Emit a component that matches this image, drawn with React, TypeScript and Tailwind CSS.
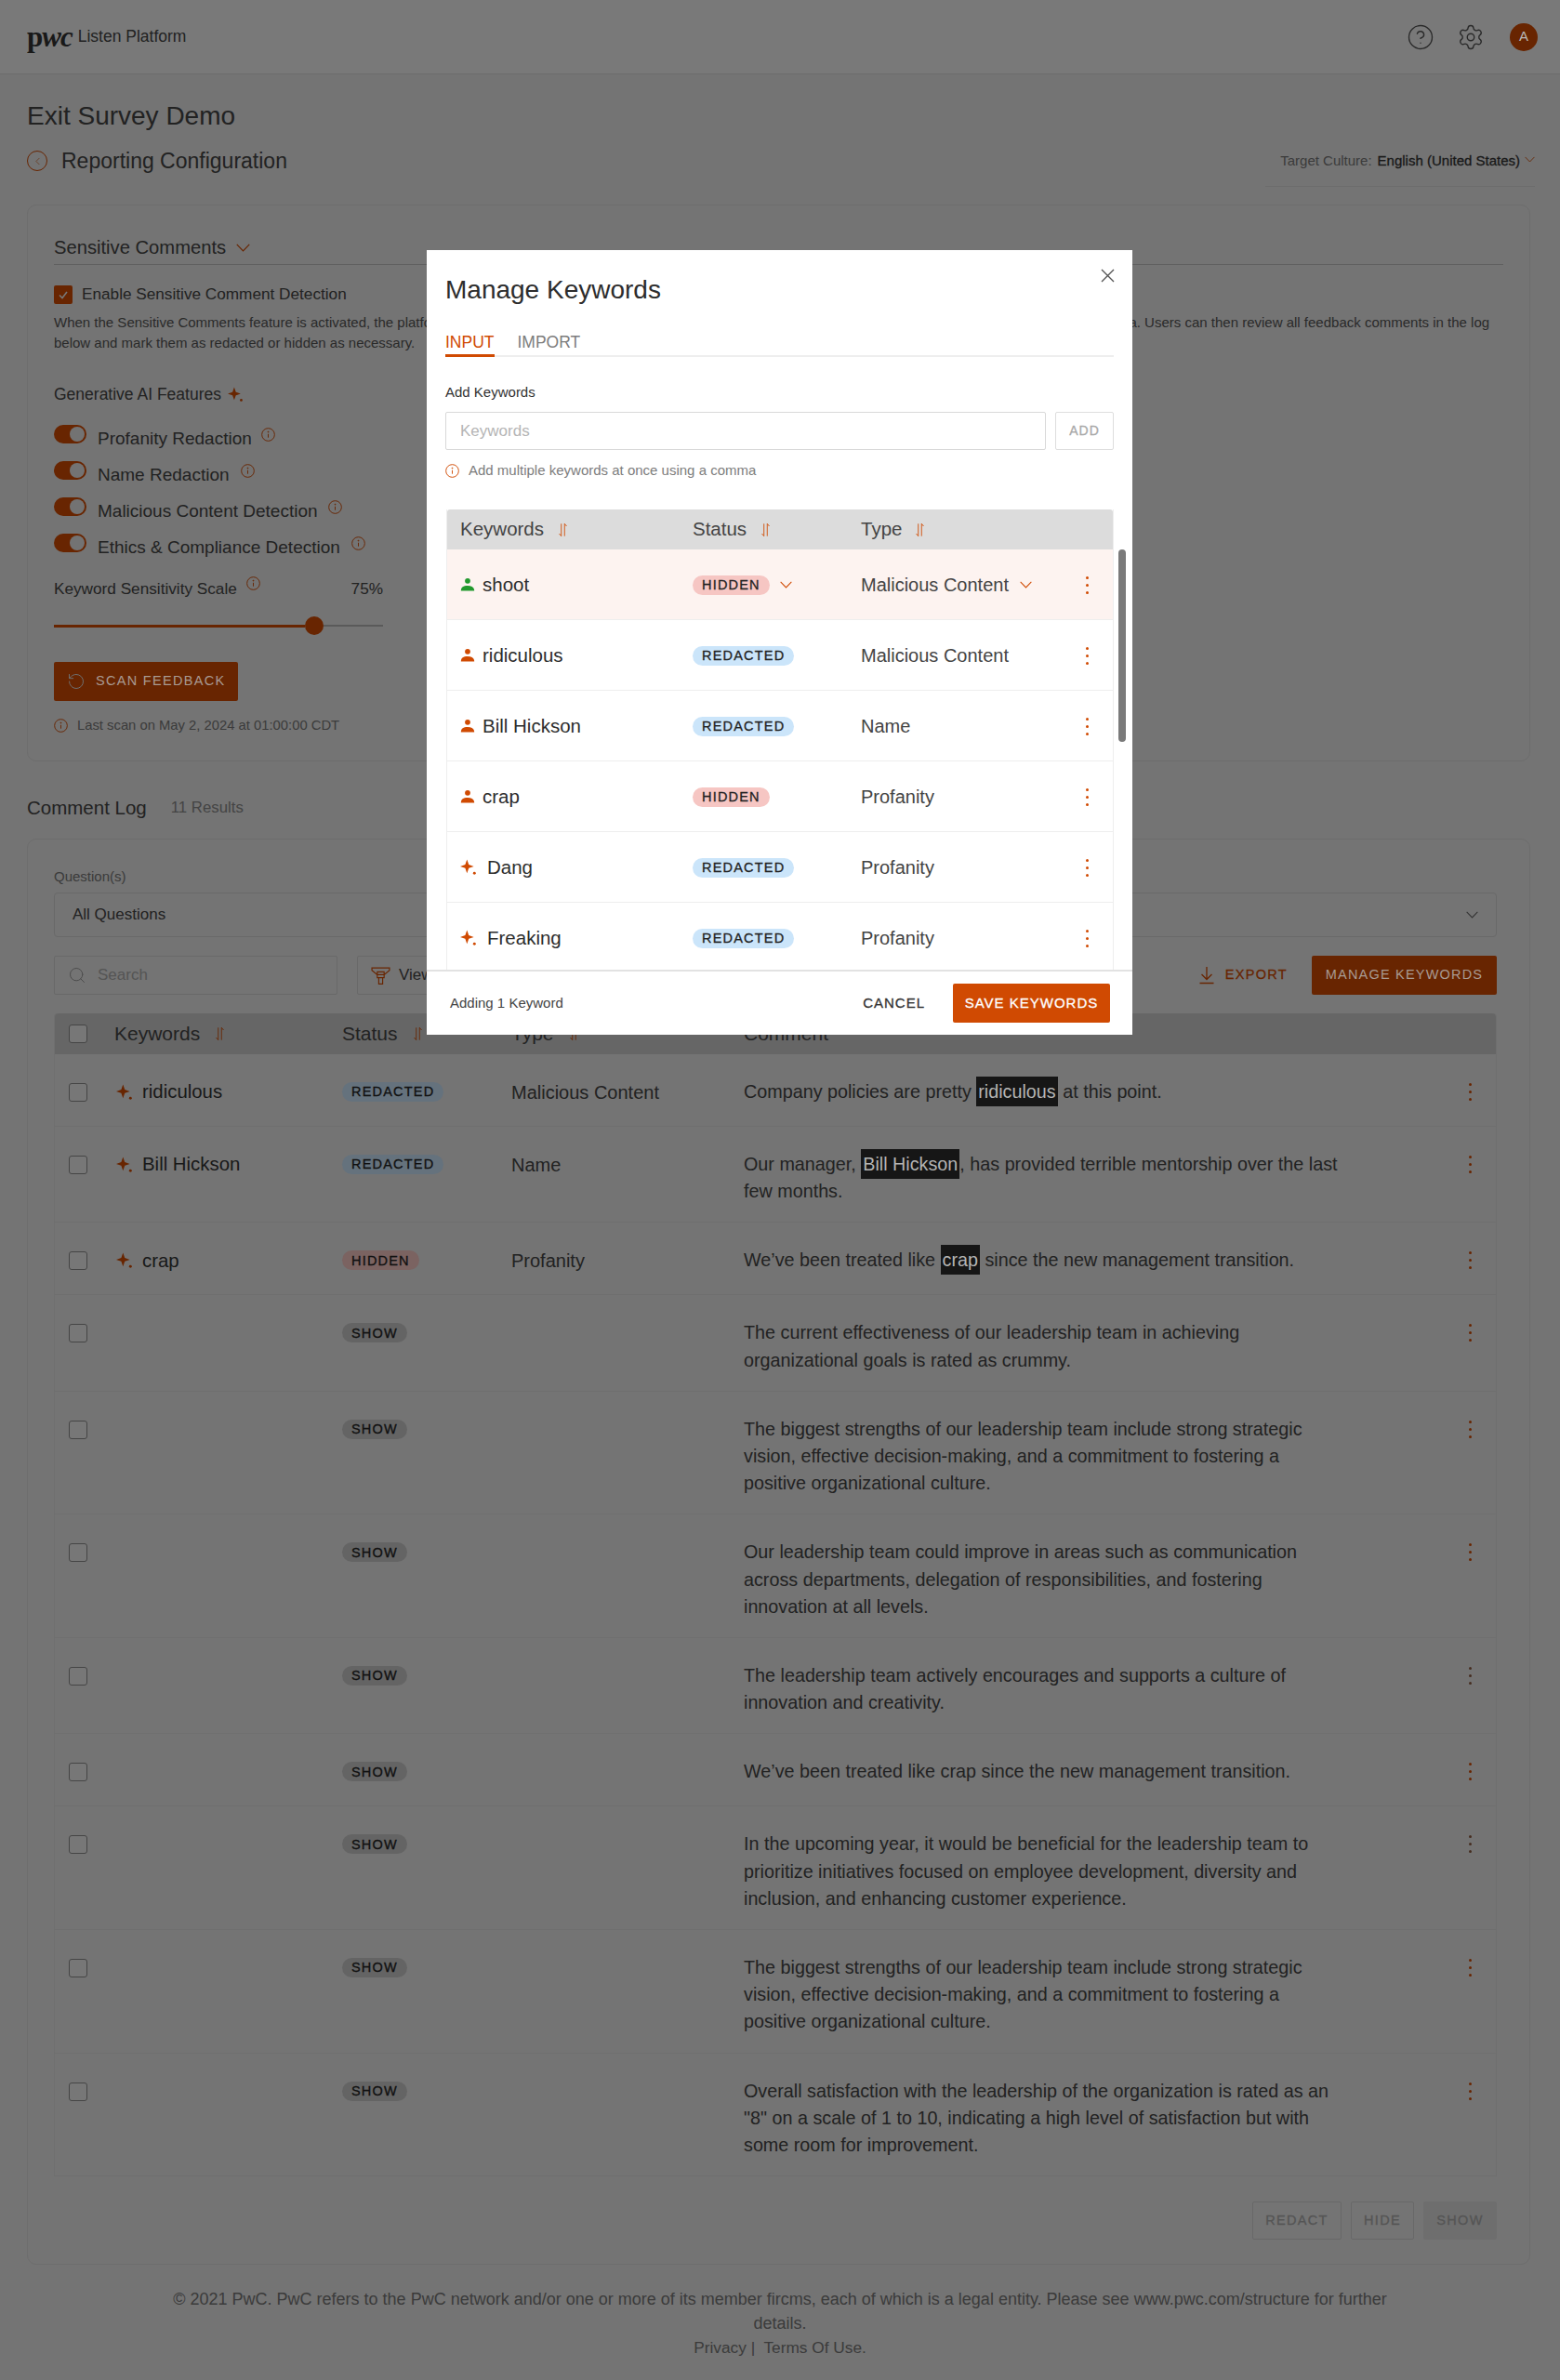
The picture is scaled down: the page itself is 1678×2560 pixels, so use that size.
import type { ReactNode } from "react";
import { ChevronLeft, CircleHelp, RotateCw, Search, Settings } from "lucide-react";

const orange = "#d04a02";
const semi = "[-webkit-text-stroke:0.3px_currentColor]";

function InfoIcon({ className = "w-[15px] h-[15px]" }: { className?: string }) {
  return (
    <svg viewBox="0 0 16 16" fill="none" className={className} stroke={orange} strokeWidth="1">
      <circle cx="8" cy="8" r="7.3" />
      <path d="M8 7.2v4.2" />
      <circle cx="8" cy="4.9" r="0.5" fill={orange} />
    </svg>
  );
}

function Sparkle({ className = "w-[18px] h-[18px]" }: { className?: string }) {
  return (
    <svg viewBox="0 0 16 16" className={className} fill={orange}>
      <path d="M6.5 0.5 L8.2 5.3 L13 7 L8.2 8.7 L6.5 13.5 L4.8 8.7 L0 7 L4.8 5.3 Z" />
      <circle cx="13.6" cy="13.6" r="1.3" />
    </svg>
  );
}

function Person({ color = orange }: { color?: string }) {
  return (
    <svg viewBox="0 0 16 16" className="w-[16px] h-[16px] shrink-0" fill={color}>
      <circle cx="8" cy="3.8" r="2.9" />
      <path d="M0.8 14.5c0-3.6 2.6-5.4 7.2-5.4s7.2 1.8 7.2 5.4z" />
    </svg>
  );
}

function SortIcon() {
  return (
    <svg viewBox="0 0 12 18" className="w-[11px] h-[16px]" fill="none" stroke={orange} strokeWidth="1">
      <path d="M4 1.5v15M4 16.5l-2.5-3M8 16.5v-15M8 1.5l2.5 3" />
    </svg>
  );
}

function Chevron({ className = "w-[13px] h-[8px]", color = orange }: { className?: string; color?: string }) {
  return (
    <svg viewBox="0 0 14 8" className={`${className} shrink-0`} fill="none" stroke={color} strokeWidth="1.1">
      <path d="M0.7 0.7L7 7.2 13.3 0.7" />
    </svg>
  );
}

function Kebab({ color = orange }: { color?: string }) {
  return (
    <div className="flex flex-col gap-[5px] items-center w-[3px]">
      <span className="w-[3px] h-[3px] rounded-full" style={{ background: color }} />
      <span className="w-[3px] h-[3px] rounded-full" style={{ background: color }} />
      <span className="w-[3px] h-[3px] rounded-full" style={{ background: color }} />
    </div>
  );
}

function Badge({ kind }: { kind: "REDACTED" | "HIDDEN" | "SHOW" }) {
  const tone =
    kind === "REDACTED" ? "bg-[#cbe5fa]" : kind === "HIDDEN" ? "bg-[#f6c6c3]" : "bg-[#c9c9c9]";
  return (
    <span
      className={`${tone} ${semi} inline-flex items-center h-[21px] px-[10px] rounded-full text-[14.5px] tracking-[1.2px] text-[#222] leading-none`}
    >
      {kind}
    </span>
  );
}

function Toggle({ label, gap }: { label: string; gap: string }) {
  return (
    <div className="flex items-start h-[39px]">
      <div className="w-[35px] h-[20px] rounded-full bg-[#d04a02] flex items-center justify-end pr-[2px]">
        <span className="w-[16px] h-[16px] rounded-full bg-[#e6e6e6]" />
      </div>
      <span className="ml-[12px] mt-[1px] text-[19px] leading-[28px] text-[#444]">{label}</span>
      <span className={`${gap} mt-[3px]`}>
        <InfoIcon />
      </span>
    </div>
  );
}

// highlighted words stay bright above the backdrop
const Hl = ({ children }: { children: ReactNode }) => (
  <span className="relative z-10 bg-[#161616] text-[#b4b4b4] px-[2px] py-[5px]">{children}</span>
);

type Row = {
  keyword?: string;
  status: "REDACTED" | "HIDDEN" | "SHOW";
  type?: string;
  comment: ReactNode;
  gray?: boolean;
};

const logRows: Row[] = [
  {
    keyword: "ridiculous",
    status: "REDACTED",
    type: "Malicious Content",
    comment: (
      <>
        Company policies are pretty <Hl>ridiculous</Hl> at this point.
      </>
    ),
  },
  {
    keyword: "Bill Hickson",
    status: "REDACTED",
    type: "Name",
    comment: (
      <>
        Our manager, <Hl>Bill Hickson</Hl>, has provided terrible mentorship over the last
        <br />
        few months.
      </>
    ),
  },
  {
    keyword: "crap",
    status: "HIDDEN",
    type: "Profanity",
    comment: (
      <>
        We’ve been treated like <Hl>crap</Hl> since the new management transition.
      </>
    ),
  },
  {
    status: "SHOW",
    comment:
      "The current effectiveness of our leadership team in achieving\norganizational goals is rated as crummy.",
  },
  {
    status: "SHOW",
    comment:
      "The biggest strengths of our leadership team include strong strategic\nvision, effective decision-making, and a commitment to fostering a\npositive organizational culture.",
  },
  {
    status: "SHOW",
    comment:
      "Our leadership team could improve in areas such as communication\nacross departments, delegation of responsibilities, and fostering\ninnovation at all levels.",
  },
  {
    status: "SHOW",
    gray: true,
    comment:
      "The leadership team actively encourages and supports a culture of\ninnovation and creativity.",
  },
  { status: "SHOW", comment: "We’ve been treated like crap since the new management transition." },
  {
    status: "SHOW",
    gray: true,
    comment:
      "In the upcoming year, it would be beneficial for the leadership team to\nprioritize initiatives focused on employee development, diversity and\ninclusion, and enhancing customer experience.",
  },
  {
    status: "SHOW",
    comment:
      "The biggest strengths of our leadership team include strong strategic\nvision, effective decision-making, and a commitment to fostering a\npositive organizational culture.",
  },
  {
    status: "SHOW",
    comment:
      "Overall satisfaction with the leadership of the organization is rated as an\n\"8\" on a scale of 1 to 10, indicating a high level of satisfaction but with\nsome room for improvement.",
  },
];

const keywordRows = [
  { name: "shoot", icon: "green", status: "HIDDEN", type: "Malicious Content", active: true },
  { name: "ridiculous", icon: "person", status: "REDACTED", type: "Malicious Content" },
  { name: "Bill Hickson", icon: "person", status: "REDACTED", type: "Name" },
  { name: "crap", icon: "person", status: "HIDDEN", type: "Profanity" },
  { name: "Dang", icon: "spark", status: "REDACTED", type: "Profanity" },
  { name: "Freaking", icon: "spark", status: "REDACTED", type: "Profanity" },
] as const;

function Checkbox() {
  return <span className="block w-[20px] h-[20px] rounded-[3px] border border-[#8a8a8a] bg-[#efefef]" />;
}

function ManageKeywords() {
  return (
    <div className="absolute z-20 left-[459px] top-[269px] w-[759px] h-[844px] bg-white flex flex-col">
      <div className="relative px-[20px] flex-1 min-h-0 flex flex-col">
        <button className="absolute right-[19px] top-[20px]">
          <svg viewBox="0 0 15 15" className="w-[15px] h-[15px]" fill="none" stroke="#555" strokeWidth="1.4">
            <path d="M1 1l13 13M14 1L1 14" />
          </svg>
        </button>
        <h2 className="mt-[26px] text-[28px] leading-[34px] text-[#2d2d2d]">Manage Keywords</h2>
        <div className="mt-[27px] flex gap-[25px] border-b-2 border-[#eeeeee] h-[28px] text-[17.5px] leading-[24px]">
          <span className="text-[#d04a02] border-b-[3px] border-[#d04a02] h-[28px]">INPUT</span>
          <span className="text-[#7d7d7d]">IMPORT</span>
        </div>
        <div className="mt-[28px] text-[15px] leading-[20px] text-[#333]">Add Keywords</div>
        <div className="mt-[11px] flex gap-[10px]">
          <div className="flex-1 h-[41px] border border-[#d9d9d9] rounded-[2px] flex items-center pl-[15px] text-[17px] text-[#b5b5b5]">
            Keywords
          </div>
          <div className={`w-[63px] h-[41px] border border-[#dedede] rounded-[2px] flex items-center justify-center text-[14px] tracking-[1px] text-[#a8a8a8] ${semi}`}>
            ADD
          </div>
        </div>
        <div className="mt-[12px] flex items-center gap-[10px] text-[15px] leading-[20px] text-[#7d7d7d]">
          <InfoIcon />
          Add multiple keywords at once using a comma
        </div>
        <div className="mt-[32px] flex-1 min-h-0 overflow-hidden ml-[1px] border-x border-[#eeeeee]">
          <div className="grid grid-cols-[250px_181px_1fr] h-[43px] items-center bg-[#dcdcdc] rounded-t-[3px] pl-[14px] text-[20.5px] text-[#444]">
            <div className="flex items-center gap-[15px]">Keywords <SortIcon /></div>
            <div className="flex items-center gap-[15px]">Status <SortIcon /></div>
            <div className="flex items-center gap-[14px]">Type <SortIcon /></div>
          </div>
          {keywordRows.map((r) => (
            <div
              key={r.name}
              className={`grid grid-cols-[250px_181px_1fr_29px] h-[76px] pt-[1px] items-center pl-[14px] border-b border-[#eeeeee] text-[20px] ${
                "active" in r ? "bg-[#fdf3f0]" : ""
              }`}
            >
              <div className="flex items-center gap-[8px] text-[20.5px] text-[#2d2d2d]">
                {r.icon === "spark" ? (
                  <span className="mr-[3px]">
                    <Sparkle />
                  </span>
                ) : (
                  <Person color={r.icon === "green" ? "#22992e" : orange} />
                )}
                {r.name}
              </div>
              <div className="flex items-center gap-[11px]">
                <Badge kind={r.status} />
                {"active" in r && <Chevron />}
              </div>
              <div className="flex items-center gap-[12px] text-[#444]">
                {r.type}
                {"active" in r && <Chevron />}
              </div>
              <Kebab />
            </div>
          ))}
        </div>
        {/* scrollbar sits over the list */}
        <div className="absolute right-[7px] top-[322px] w-[8px] h-[207px] rounded-full bg-[#7a7a7a]" />
      </div>
      <div className="h-[70px] border-t-2 border-[#e2e2e2] flex items-center pl-[25px] pr-[24px] bg-white">
        <span className="text-[15px] text-[#444]">Adding 1 Keyword</span>
        <span className={`ml-auto text-[15px] tracking-[1px] text-[#333] ${semi}`}>CANCEL</span>
        <button className={`ml-[30px] w-[169px] h-[42px] rounded-[2px] bg-[#d04a02] text-white text-[15px] tracking-[1px] ${semi}`}>
          SAVE KEYWORDS
        </button>
      </div>
    </div>
  );
}

export default function App() {
  return (
    <div className="relative min-h-[2560px] bg-[#e8e8e8] font-['Liberation_Sans',Arial,sans-serif] text-[#444] overflow-hidden">
      <header className="h-[80px] bg-[#f3f3f3] border-b border-[#d8d8d8] flex items-center pl-[29px] pr-[24px]">
        <span className="font-['Liberation_Serif',serif] font-bold text-[31px] leading-none text-[#333] tracking-[-1px]">
          p<i>wc</i>
        </span>
        <span className="ml-[6px] text-[17.5px] text-[#444]">Listen Platform</span>
        <div className="ml-auto flex items-center text-[#555]">
          <CircleHelp className="w-[30px] h-[30px]" strokeWidth={1.1} />
          <Settings className="ml-[24px] w-[30px] h-[30px]" strokeWidth={1.1} />
          <span className="ml-[27px] w-[30px] h-[30px] rounded-full bg-[#d04a02] flex items-center justify-center text-[15px]">
            <span className="relative z-10 text-[#b8b8b8]">A</span>
          </span>
        </div>
      </header>

      <main className="px-[29px]">
        <h1 className="mt-[28px] text-[28px] leading-[34px] text-[#444]">Exit Survey Demo</h1>
        <div className="mt-[16px] flex items-start justify-between h-[43px]">
          <div className="flex items-center h-[30px]">
            <span className="w-[22px] h-[22px] rounded-full border border-[#d04a02] flex items-center justify-center text-[#d04a02]">
              <ChevronLeft className="w-[13px] h-[13px]" strokeWidth={1.1} />
            </span>
            <h2 className="ml-[15px] text-[23px] text-[#444]">Reporting Configuration</h2>
          </div>
          <div className="w-[290px] h-[43px] border-b border-[#d8d8d8] flex items-start justify-end pt-[4px] -mr-[2px] text-[15px]">
            <span className="text-[#777]">Target Culture:</span>
            <span className={`ml-[6px] text-[#333] ${semi}`}>English (United States)</span>
            <Chevron className="ml-[5px] mt-[6px] w-[11px] h-[7px]" />
          </div>
        </div>

        <section className="mt-[19px] w-[1617px] border border-[#dadada] rounded-[10px] px-[28px] pt-[32px] pb-[28px]">
          <div className="flex items-center h-[32px] pb-[4px] border-b border-[#c0c0c0] text-[20.2px] text-[#444]">
            Sensitive Comments
            <Chevron className="ml-[11px] w-[15px] h-[9px]" />
          </div>
          <div className="mt-[22px] flex items-center h-[20px] text-[17.2px] text-[#444]">
            <span className="w-[20px] h-[20px] rounded-[2px] bg-[#d04a02] flex items-center justify-center">
              <svg viewBox="0 0 12 12" className="w-[12px] h-[12px]" fill="none" stroke="#eee" strokeWidth="1.6">
                <path d="M2 6.5l3 3 5-6.5" />
              </svg>
            </span>
            <span className="ml-[10px]">Enable Sensitive Comment Detection</span>
          </div>
          <p className="mt-[9px] text-[15px] leading-[22px] text-[#555] whitespace-nowrap">
            When the Sensitive Comments feature is activated, the platform will scan all survey feedback for
            sensitive language and flag it using keywords and generative AI over your data. Users can then review all feedback comments in the log
            <br />
            below and mark them as redacted or hidden as necessary.
          </p>
          <div className="mt-[32px] flex items-center h-[24px] text-[17.5px] text-[#444]">
            Generative AI Features
            <span className="ml-[7px]">
              <Sparkle className="w-[17px] h-[17px]" />
            </span>
          </div>
          <div className="mt-[21px] flex flex-col w-[370px]">
            <Toggle label="Profanity Redaction" gap="ml-[10px]" />
            <Toggle label="Name Redaction" gap="ml-[12px]" />
            <Toggle label="Malicious Content Detection" gap="ml-[11px]" />
            <Toggle label="Ethics & Compliance Detection" gap="ml-[12px]" />
          </div>
          <div className="mt-[9px] w-[354px] flex items-center h-[24px] text-[17.2px] text-[#444]">
            Keyword Sensitivity Scale
            <span className="ml-[10px] -mt-[14px]">
              <InfoIcon />
            </span>
            <span className="ml-auto">75%</span>
          </div>
          <div className="mt-[17px] w-[354px] h-[20px] flex items-center">
            <span className="w-[270px] h-[3px] bg-[#d04a02]" />
            <span className="w-[20px] h-[20px] rounded-full bg-[#d04a02] shrink-0" />
            <span className="flex-1 h-[2px] bg-[#b5b5b5]" />
          </div>
          <button className="mt-[29px] w-[198px] h-[42px] rounded-[2px] bg-[#d04a02] flex items-center pl-[14px] text-[14.5px] tracking-[1.3px] text-[#ddd]">
            <RotateCw className="w-[20px] h-[20px] -scale-x-100" strokeWidth={1.2} />
            <span className="relative z-10 ml-[11px] text-[#a89a92]">SCAN FEEDBACK</span>
          </button>
          <div className="mt-[16px] flex items-center h-[20px] gap-[10px] text-[14.8px] text-[#777]">
            <InfoIcon />
            Last scan on May 2, 2024 at 01:00:00 CDT
          </div>
        </section>

        <div className="mt-[36px] flex items-center h-[28px]">
          <h2 className="text-[20.5px] text-[#444]">Comment Log</h2>
          <span className="ml-[26px] text-[16.8px] text-[#888]">11 Results</span>
        </div>

        <section className="mt-[19px] w-[1617px] border border-[#dadada] rounded-[10px] pl-[28px] pr-[35px] pt-[30px] pb-[26px]">
          <div className="h-[20px] text-[15px] leading-[20px] text-[#777]">Question(s)</div>
          <div className="mt-[7px] h-[48px] border border-[#d2d2d2] rounded-[4px] flex items-center pl-[19px] pr-[19px] text-[17px] text-[#444]">
            All Questions
            <Chevron className="ml-auto w-[13px] h-[8px]" color="#666666" />
          </div>
          <div className="mt-[20px] flex items-center h-[42px]">
            <div className="w-[305px] h-[42px] border border-[#d2d2d2] rounded-[2px] flex items-center pl-[14px] text-[17px] text-[#aaa]">
              <Search className="w-[20px] h-[20px] text-[#999]" strokeWidth={1.2} />
              <span className="ml-[12px]">Search</span>
            </div>
            <div className="ml-[21px] w-[200px] h-[42px] border border-[#d2d2d2] rounded-[2px] flex items-center pl-[14px] text-[17px] text-[#444]">
              <svg viewBox="0 0 20 20" className="w-[21px] h-[21px]" fill="none" stroke={orange} strokeWidth="1.1">
                <path d="M1 2h18v2.5l-5.5 4.5v-3H6.5v3L1 4.5zM6.5 9h7v3h-7zM8 12h4v6.5H8z" />
              </svg>
              <span className="ml-[9px]">View</span>
            </div>
            <div className={`ml-auto flex items-center text-[14.5px] tracking-[1.3px] text-[#d04a02] ${semi}`}>
              <svg viewBox="0 0 16 20" className="w-[16px] h-[20px]" fill="none" stroke={orange} strokeWidth="1.3">
                <path d="M8 1v13M2.5 9L8 14.5 13.5 9M0.5 18.5h15" />
              </svg>
              <span className="ml-[12px]">EXPORT</span>
            </div>
            <button className="ml-[26px] w-[199px] h-[42px] rounded-[2px] bg-[#d04a02] text-[14.5px] tracking-[1.2px]">
              <span className="relative z-10 text-[#a89a92]">MANAGE KEYWORDS</span>
            </button>
          </div>

          <div className="mt-[20px] border border-[#dedede] border-t-0 rounded-t-[4px]">
            <div className="grid grid-cols-[64px_245px_182px_250px_1fr_49px] h-[44px] items-center bg-[#cccccc] rounded-t-[4px] text-[21px] text-[#444]">
              <span className="pl-[15px]">
                <Checkbox />
              </span>
              <div className="flex items-center gap-[16px]">Keywords <SortIcon /></div>
              <div className="flex items-center gap-[16px]">Status <SortIcon /></div>
              <div className="flex items-center gap-[16px]">Type <SortIcon /></div>
              <div>Comment</div>
            </div>
            {logRows.map((r, i) => (
              <div
                key={i}
                className="grid grid-cols-[64px_245px_182px_250px_1fr_49px] min-h-[78px] pt-[26px] pb-[18px] items-start border-b border-[#dedede] last:border-b-0"
              >
                <span className="pl-[15px] pt-[5px]">
                  <Checkbox />
                </span>
                <div className="flex items-center gap-[10px] h-[29px] pl-[2px] text-[20.4px] text-[#333]">
                  {r.keyword && <Sparkle />}
                  {r.keyword}
                </div>
                <div className="flex items-center h-[29px]">
                  <Badge kind={r.status} />
                </div>
                <div className="flex items-center h-[29px] text-[20px] text-[#444]">{r.type}</div>
                <div className="text-[19.75px] leading-[29.2px] text-[#444] whitespace-pre-line">{r.comment}</div>
                <div className="flex items-center h-[29px] pl-[20px]">
                  <Kebab color={r.gray ? "#8a5a40" : orange} />
                </div>
              </div>
            ))}
          </div>

          <div className={`mt-[27px] flex justify-end gap-[10px] text-[14.5px] tracking-[1.3px] text-[#aaa] ${semi}`}>
            <div className="w-[96px] h-[41px] border border-[#d0d0d0] rounded-[2px] flex items-center justify-center">REDACT</div>
            <div className="w-[68px] h-[41px] border border-[#d0d0d0] rounded-[2px] flex items-center justify-center">HIDE</div>
            <div className="w-[79px] h-[41px] bg-[#dddddd] rounded-[2px] flex items-center justify-center">SHOW</div>
          </div>
        </section>
      </main>

      <footer className="mt-[24px] mx-auto w-[1320px] text-center text-[18px] leading-[26px] text-[#777]">
        © 2021 PwC. PwC refers to the PwC network and/or one or more of its member fircms, each of which is a legal entity. Please see www.pwc.com/structure for further details.
        <br />
        <span className="text-[17.3px]">Privacy |&nbsp; Terms Of Use.</span>
      </footer>

      {/* dimmed backdrop and dialog lie over the page */}
      <div className="absolute inset-0 bg-black/50" />
      <ManageKeywords />
    </div>
  );
}
